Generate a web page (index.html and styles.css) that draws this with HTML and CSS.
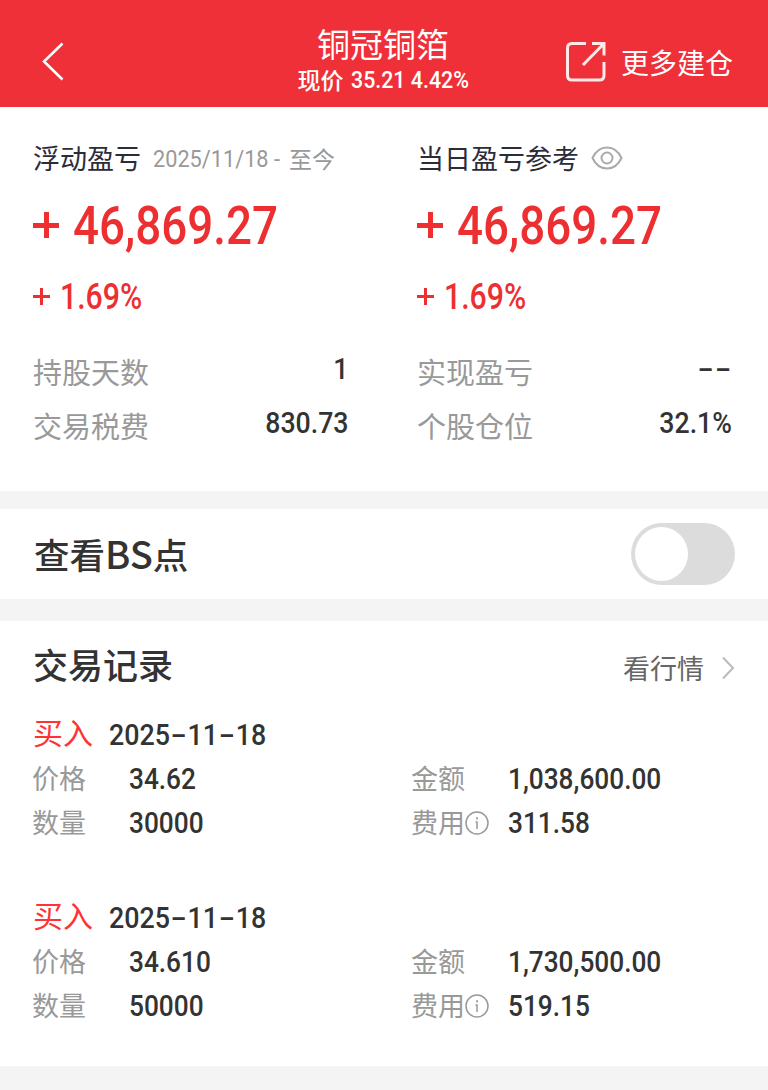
FILE: index.html
```html
<!DOCTYPE html>
<html lang="zh-CN">
<head>
<meta charset="utf-8">
<title>铜冠铜箔</title>
<link rel="stylesheet" href="styles.css">
</head>
<body>
<header class="header">
  <svg class="back" width="24" height="40" viewBox="0 0 24 40"><path d="M21.5 2.5 3 20.5 21.5 38.500"/></svg>
  <div class="heading">
    <h1 class="title">铜冠铜箔</h1>
    <div class="quote"><span class="quote-label">现价</span><span class="num quote-num">35.21 4.42%</span></div>
  </div>
  <div class="more">
    <svg class="share" width="42" height="42" viewBox="0 0 42 42"><path d="M20 2.500H6Q1.500 2.500 1.500 7V34.500Q1.500 39 6 39H33.500Q38 39 38 34.500V21M26 2.500H38V14.500M37.500 3 17 24"/></svg>
    <span>更多建仓</span>
  </div>
</header>

<section class="summary">
  <div class="col">
    <div class="caption"><span>浮动盈亏</span><span class="range"><span class="num range-num">2025/11/18 -</span><span class="range-end">至今</span></span></div>
    <div class="amount"><span class="plus"></span><span class="num">46,869.27</span></div>
    <div class="percent"><span class="plus"></span><span class="num">1.69%</span></div>
    <div class="info"><span>持股天数</span><span class="num value">1</span></div>
    <div class="info"><span>交易税费</span><span class="num value">830.73</span></div>
  </div>
  <div class="col">
    <div class="caption"><span>当日盈亏参考</span><svg class="eye" width="32" height="24" viewBox="0 0 32 24"><path d="M1.500 12C8-2 24-2 30.500 12C24 26 8 26 1.500 12Z"/><circle cx="16" cy="12" r="5.500"/></svg></div>
    <div class="amount"><span class="plus"></span><span class="num">46,869.27</span></div>
    <div class="percent"><span class="plus"></span><span class="num">1.69%</span></div>
    <div class="info"><span>实现盈亏</span><span class="num value"><span class="dash">-</span><span class="dash">-</span></span></div>
    <div class="info"><span>个股仓位</span><span class="num value">32.1%</span></div>
  </div>
</section>

<section class="bs">
  <h2 class="bs-title">查看<span class="bs-latin">BS</span>点</h2>
  <div class="switch"><div class="knob"></div></div>
</section>

<section class="records">
  <div class="records-head">
    <h2 class="records-title">交易记录</h2>
    <div class="market"><span>看行情</span><svg width="14" height="26" viewBox="0 0 14 26"><path d="M2 2.500 12 13 2 23.500"/></svg></div>
  </div>

  <article class="record">
    <div class="record-top"><span class="buy">买入</span><span class="num date">2025<span class="dash">-</span>11<span class="dash">-</span>18</span></div>
    <div class="record-row">
      <span class="label">价格</span><span class="num">34.62</span>
      <span class="label">金额</span><span class="num">1,038,600.00</span>
    </div>
    <div class="record-row">
      <span class="label">数量</span><span class="num">30000</span>
      <span class="label">费用<svg width="24" height="24" viewBox="0 0 24 24"><circle cx="12" cy="12" r="11"/><path d="M12 6v2.500M10.500 11H12v7"/></svg></span><span class="num">311.58</span>
    </div>
  </article>

  <article class="record">
    <div class="record-top"><span class="buy">买入</span><span class="num date">2025<span class="dash">-</span>11<span class="dash">-</span>18</span></div>
    <div class="record-row">
      <span class="label">价格</span><span class="num">34.610</span>
      <span class="label">金额</span><span class="num">1,730,500.00</span>
    </div>
    <div class="record-row">
      <span class="label">数量</span><span class="num">50000</span>
      <span class="label">费用<svg width="24" height="24" viewBox="0 0 24 24"><circle cx="12" cy="12" r="11"/><path d="M12 6v2.500M10.500 11H12v7"/></svg></span><span class="num">519.15</span>
    </div>
  </article>
</section>
</body>
</html>
```
FILE: styles.css
```css
* { box-sizing: border-box; }
body {
  margin: 0;
  width: 768px;
  height: 1090px;
  overflow: hidden;
  background: #f4f4f4;
  color: #333;
  font-family: "Noto Sans CJK SC", sans-serif;
  white-space: nowrap;
}
h1, h2 { margin: 0; }
svg { fill: none; flex: none; display: block; }
.num {
  display: inline-block;
  font-family: Roboto, sans-serif;
  font-weight: 500;
  transform-origin: left center;
}

/* Header */
.header {
  display: grid;
  grid-template-columns: 200px 1fr 202px;
  height: 107px;
  background: #ef3038;
  color: #fff;
}
.back { margin: 41px 0 0 41px; stroke: #fff; stroke-width: 2.600; }
.heading { display: flex; flex-direction: column; align-items: center; padding-top: 26px; }
.title { font-size: 33px; line-height: 34px; font-weight: 400; }
.quote { display: flex; align-items: center; gap: 7px; height: 38px; width: 171px; font-size: 23px; line-height: 38px; }
.quote-label { font-weight: 500; }
.quote-num { padding-top: 1px; font-size: 24px; transform: scaleX(.89); }
.more { display: flex; align-items: center; gap: 13px; height: 42px; margin-top: 41px; font-size: 28px; line-height: 42px; }
.share { stroke: #ffe9e9; stroke-width: 3; }

/* Profit summary */
.summary { display: grid; grid-template-columns: 384px 384px; height: 384px; background: #fff; }
.col { padding: 31px 36px 0 33px; }
.caption { display: flex; align-items: center; height: 40px; font-size: 27px; line-height: 40px; color: #2c2c38; }
.range { display: flex; align-items: center; margin-left: 12px; color: #999; font-size: 23px; }
.range-num { width: 136px; padding-top: 2px; font-size: 24px; font-weight: 400; transform: scaleX(.905); }
.eye { margin-left: 12px; stroke: #aaa; stroke-width: 2; }
.amount, .percent { display: flex; align-items: center; color: #ed2f32; }
.amount { height: 60px; margin-top: 17px; font-size: 54px; line-height: 60px; }
.amount .num { margin-left: 14px; padding-top: 2px; transform: scaleX(.847); }
.percent { height: 32px; margin-top: 25px; font-size: 36px; line-height: 32px; }
.percent .num { margin-left: 10px; padding-top: 2px; transform: scaleX(.84); }
.plus {
  width: 26px;
  height: 26px;
  background:
    linear-gradient(currentColor, currentColor) center / 100% 5px no-repeat,
    linear-gradient(currentColor, currentColor) center / 5px 100% no-repeat;
}
.percent .plus { width: 17px; height: 17px; background-size: 100% 3px, 3px 100%; }
.info { display: flex; justify-content: space-between; align-items: center; height: 54px; font-size: 29px; line-height: 54px; color: #999; }
.percent + .info { margin-top: 32px; }
.value { color: #333; padding-bottom: 3px; line-height: 51px; transform: scaleX(.92); transform-origin: right center; }
.dash { display: inline-block; width: 19px; text-align: center; transform: scaleX(1.750); }

/* BS switch */
.bs { display: flex; justify-content: space-between; align-items: center; height: 90px; margin-top: 18px; padding: 0 33px 0 34px; background: #fff; }
.bs-title { padding-bottom: 1px; font-size: 35.500px; line-height: 50px; font-weight: 500; }
.bs-latin { font-size: 38px; }
.switch { width: 104px; height: 62px; padding: 4px; border-radius: 31px; background: #dcdcdc; }
.knob { width: 53px; height: 54px; border-radius: 50%; background: #fff; }

/* Trade records */
.records { height: 445px; margin-top: 22px; padding: 20px 33px 0; background: #fff; }
.records-head { display: flex; justify-content: space-between; height: 46px; line-height: 46px; }
.records-title { font-size: 35px; font-weight: 500; }
.market { display: flex; align-items: center; gap: 17px; padding-top: 4px; height: 50px; font-size: 27px; color: #666; }
.market svg { stroke: #bbb; stroke-width: 2; }
.record { height: 183px; padding-top: 25px; font-size: 29px; }
.record-top { display: flex; align-items: center; height: 44px; line-height: 44px; }
.buy { width: 76px; padding-bottom: 5px; font-size: 30px; line-height: 39px; color: #f33; }
.date { padding-top: 1px; transform: scaleX(.925); }
.record-row { display: grid; grid-template-columns: 96px 283px 96px auto; align-items: center; height: 44px; line-height: 44px; }
.record-row .num { padding-top: 2px; line-height: 42px; transform: scaleX(.905); }
.label { display: flex; align-items: center; margin-left: -1px; font-size: 27px; color: #999; }
.label svg { margin-top: 2px; stroke: #999; stroke-width: 1.500; }
```
